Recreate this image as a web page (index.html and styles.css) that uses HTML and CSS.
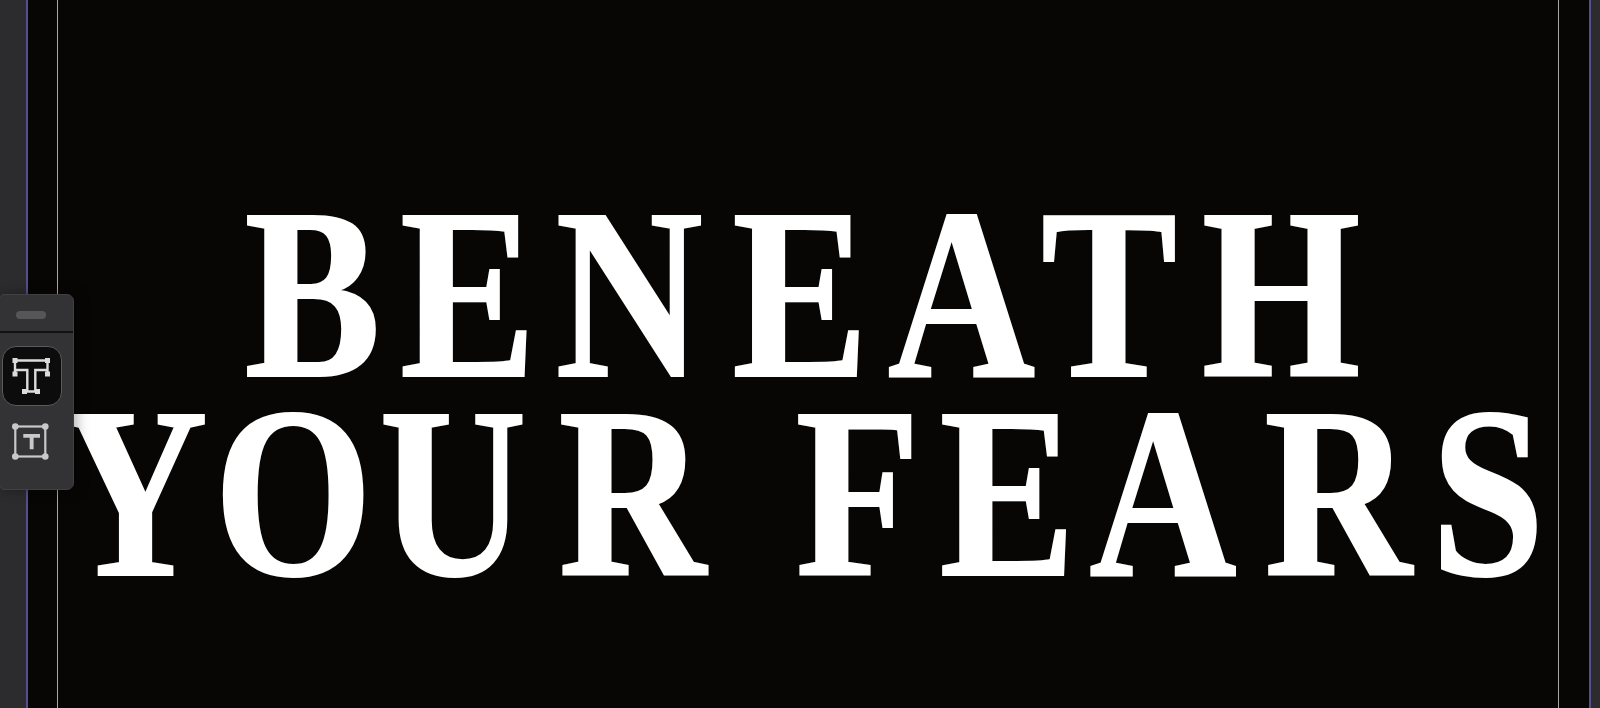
FILE: index.html
```html
<!DOCTYPE html>
<html lang="en">
<head>
<meta charset="utf-8">
<title>Beneath Your Fears</title>
<link rel="stylesheet" href="styles.css">
</head>
<body>
<div class="stage">
  <div class="bleed">
    <div class="frame">
      <h1 class="title"><span class="line line-first">BE<span class="k-n">N</span>E<span class="k-at">A</span><span class="k-t">T</span>H</span><span class="line line-second"><span class="k-y">Y</span><span class="k-o">O</span><span class="k-u">U</span>R F<span class="k-e">E</span><span class="k-a">A</span>RS</span></h1>
    </div>
  </div>
</div>
<aside class="toolbar">
  <div class="grip"><span class="grip-bar"></span></div>
  <button class="tool tool-active" type="button" aria-label="Text frame">
    <svg viewBox="0 0 40 40" width="40" height="40" class="ico">
      <path d="M3 4.500H35.500M3 4.500V18M35.500 4.500V18M3 14H15.300V35.500H12.500M35.500 14H23.300V35.500H25.500M12.500 35.500H25.500" fill="none" stroke="#dcdcdc" stroke-width="2.400"/>
      <path d="M.5 2h5v5h-5zM33 2h5v5h-5zM.5 15.500h5v5h-5zM33 15.500h5v5h-5zM10 33h5v5h-5zM23 33h5v5h-5z" fill="#dcdcdc"/>
    </svg>
  </button>
  <button class="tool" type="button" aria-label="Text box">
    <svg viewBox="0 0 40 40" width="40" height="40" class="ico">
      <rect x="4.300" y="4.500" width="30" height="30" fill="none" stroke="#c8c8c8" stroke-width="2.200"/>
      <circle cx="4.300" cy="4.500" r="3.300" fill="#c8c8c8"/><circle cx="34.300" cy="4.500" r="3.300" fill="#c8c8c8"/>
      <circle cx="4.300" cy="34.500" r="3.300" fill="#c8c8c8"/><circle cx="34.300" cy="34.500" r="3.300" fill="#c8c8c8"/>
      <path d="M12.300 12H29V15.800H22.600V27.300H18.700V15.800H12.300Z" fill="#c8c8c8"/>
    </svg>
  </button>
</aside>
</body>
</html>
```

FILE: styles.css
```css
* { box-sizing: border-box; }
html, body { margin: 0; height: 100%; overflow: hidden; }
body { background: #2c2c2e; position: relative; }
.stage { height: 708px; padding: 0 9px 0 26px; }
.bleed {
  height: 100%;
  background: #070605;
  border-left: 2px solid #54508f;
  border-right: 2px solid #54508f;
  padding: 0 30px 0 29px;
}
.frame {
  height: 100%;
  border-left: 1px solid #a8a8a8;
  border-right: 1px solid #a8a8a8;
  display: flex;
  align-items: flex-start;
  justify-content: center;
  padding-top: 195px;
}
.title {
  margin: 0;
  font-family: "Liberation Serif", "Times New Roman", serif;
  font-weight: 700;
  font-size: 243px;
  line-height: 199px;
  letter-spacing: 23px;
  -webkit-text-stroke: 2px #fff;
  color: #fff;
  text-align: center;
  white-space: nowrap;
  transform: scaleX(0.84);
}
.line { display: block; }
.line-first { padding-left: 10px; }
.line-second { padding-left: 10px; }
.k-n { letter-spacing: 35px; }
.k-at { letter-spacing: 7px; }
.k-t { letter-spacing: 29px; }
.k-y { letter-spacing: 7px; }
.k-o { letter-spacing: 8px; }
.k-u { letter-spacing: 38px; }
.k-e { letter-spacing: 16px; }
.k-a { letter-spacing: 33px; }
.toolbar {
  position: absolute;
  left: -2px;
  top: 294px;
  width: 76px;
  height: 196px;
  background: #333335;
  border: 1px solid #414143;
  border-radius: 7px;
  box-shadow: 2px 0 14px rgba(0,0,0,.35);
  display: flex;
  flex-direction: column;
  align-items: flex-start;
}
.grip {
  width: 100%;
  height: 38px;
  border-bottom: 2px solid #111;
  display: flex;
  align-items: center;
  padding: 3px 0 0 17px;
}
.grip-bar { width: 30px; height: 8px; border-radius: 4px; background: #565658; }
.tool {
  width: 60px;
  height: 60px;
  margin: 13px 0 0 3px;
  padding: 0;
  border: 1px solid #5a5a5c;
  border-radius: 14px;
  background: transparent;
  display: flex;
  align-items: center;
  justify-content: center;
}
.tool + .tool { border-color: transparent; margin-top: 6px; margin-left: 2px; }
.tool-active { background: #0c0c0c; }
.ico { display: block; }
```
